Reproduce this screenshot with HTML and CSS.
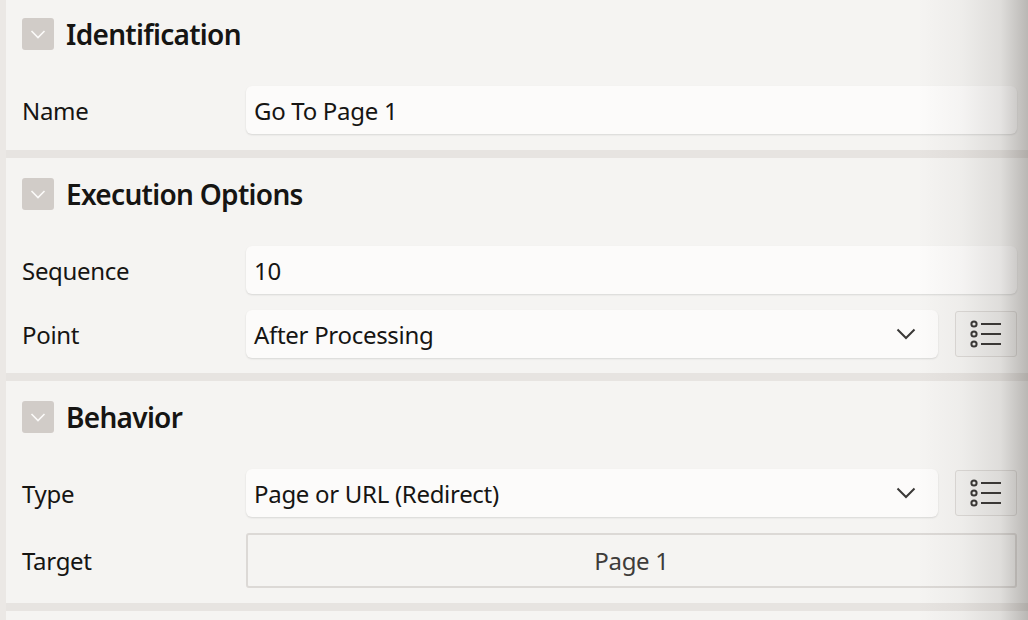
FILE: index.html
```html
<!DOCTYPE html>
<html>
<head>
<meta charset="utf-8">
<link rel="stylesheet" href="styles.css">
</head>
<body>
<div class="page">
  <div class="strip"></div>
  <div class="panel">
    <section class="group first">
      <div class="group-head">
        <span class="toggle"><svg width="32" height="32" viewBox="0 0 32 32"><path d="M9.5 13 L16 19.5 L22.5 13" fill="none" stroke="#fbfaf9" stroke-width="1.6"/></svg></span>
        <h2>Identification</h2>
      </div>
      <div class="rows">
        <div class="row">
          <label class="lbl">Name</label>
          <div class="field input">Go To Page 1</div>
        </div>
      </div>
    </section>
    <section class="group">
      <div class="group-head">
        <span class="toggle"><svg width="32" height="32" viewBox="0 0 32 32"><path d="M9.5 13 L16 19.5 L22.5 13" fill="none" stroke="#fbfaf9" stroke-width="1.6"/></svg></span>
        <h2>Execution Options</h2>
      </div>
      <div class="rows">
        <div class="row">
          <label class="lbl">Sequence</label>
          <div class="field input">10</div>
        </div>
        <div class="row">
          <label class="lbl">Point</label>
          <div class="field select">
            <span>After Processing</span>
            <svg class="caret" width="20" height="12" viewBox="0 0 20 12"><path d="M1.5 1.5 L10 10 L18.5 1.5" fill="none" stroke="#3a3836" stroke-width="2"/></svg>
          </div>
          <button class="lov"><svg width="34" height="28" viewBox="0 0 34 28"><g fill="none" stroke="#3a3836" stroke-width="2"><circle cx="5" cy="4" r="2.6"/><circle cx="5" cy="14" r="2.6"/><circle cx="5" cy="24" r="2.6"/><path d="M12 4 H32 M12 14 H32 M12 24 H32"/></g></svg></button>
        </div>
      </div>
    </section>
    <section class="group">
      <div class="group-head">
        <span class="toggle"><svg width="32" height="32" viewBox="0 0 32 32"><path d="M9.5 13 L16 19.5 L22.5 13" fill="none" stroke="#fbfaf9" stroke-width="1.6"/></svg></span>
        <h2>Behavior</h2>
      </div>
      <div class="rows">
        <div class="row">
          <label class="lbl">Type</label>
          <div class="field select">
            <span>Page or URL (Redirect)</span>
            <svg class="caret" width="20" height="12" viewBox="0 0 20 12"><path d="M1.5 1.5 L10 10 L18.5 1.5" fill="none" stroke="#3a3836" stroke-width="2"/></svg>
          </div>
          <button class="lov"><svg width="34" height="28" viewBox="0 0 34 28"><g fill="none" stroke="#3a3836" stroke-width="2"><circle cx="5" cy="4" r="2.6"/><circle cx="5" cy="14" r="2.6"/><circle cx="5" cy="24" r="2.6"/><path d="M12 4 H32 M12 14 H32 M12 24 H32"/></g></svg></button>
        </div>
        <div class="row">
          <label class="lbl">Target</label>
          <button class="field target">Page 1</button>
        </div>
      </div>
    </section>
    <section class="group last"></section>
  </div>
  <div class="edge-shadow"></div>
</div>
</body>
</html>
```

FILE: styles.css
```css
* { box-sizing: border-box; }
html, body {
  margin: 0;
  padding: 0;
  width: 1028px;
  height: 620px;
  overflow: hidden;
  background: #ebe8e5;
  font-family: "Noto Sans", "Open Sans", sans-serif;
  color: #161513;
}
.page {
  position: relative;
  display: flex;
  width: 1028px;
  height: 620px;
  overflow: hidden;
}
.strip {
  width: 6px;
  flex: none;
  background: #ebe8e5;
}
.panel {
  flex: 1;
  display: flex;
  flex-direction: column;
  gap: 8px;
  background: #e7e4e1;
  margin-top: -2px;
}
.group {
  background: #f5f4f2;
  padding: 20px 11px 15px 16px;
}
.group.first { padding-bottom: 16px; }
.group.last { flex: 1; padding: 0; }
.group-head {
  display: flex;
  align-items: center;
  gap: 12px;
  height: 32px;
  margin-bottom: 36px;
}
.toggle {
  width: 32px;
  height: 32px;
  border-radius: 3px;
  background: #d1ccc8;
  display: flex;
}
.group-head h2 {
  margin: 0;
  font-size: 28px;
  font-weight: 600;
  letter-spacing: -0.7px;
  color: #161513;
  line-height: 32px;
}
.rows {
  display: flex;
  flex-direction: column;
  gap: 16px;
}
.row {
  display: flex;
  align-items: center;
  gap: 17px;
}
.lbl {
  width: 207px;
  flex: none;
  font-size: 24px;
  letter-spacing: -0.3px;
  color: #161513;
}
.field {
  flex: 1;
  height: 48px;
  border-radius: 6px;
  background: #fcfbfa;
  box-shadow: 0 1px 2px rgba(0,0,0,0.12);
  font-family: inherit;
  font-size: 24px;
  letter-spacing: -0.3px;
  color: #161513;
  display: flex;
  align-items: center;
  padding: 0 8px;
}
.select {
  justify-content: space-between;
  padding-right: 22px;
}
.caret { display: block; }
.lov {
  flex: none;
  width: 62px;
  height: 46px;
  border: 1px solid #dcd9d6;
  border-radius: 3px;
  background: #f2f1ef;
  display: flex;
  align-items: center;
  justify-content: center;
  padding: 0;
  margin-right: 0;
}
.lov svg { display: block; }
.target {
  height: 55px;
  border: 2px solid #dcd9d6;
  border-radius: 3px;
  background: #f5f4f2;
  box-shadow: none;
  justify-content: center;
  color: #3e3c3a;
}
.edge-shadow {
  position: absolute;
  top: 0;
  right: 0;
  width: 110px;
  height: 620px;
  pointer-events: none;
  background: linear-gradient(to right, rgba(60,55,50,0) 0%, rgba(60,55,50,0.04) 40%, rgba(60,55,50,0.12) 75%, rgba(60,55,50,0.32) 100%);
}
```
